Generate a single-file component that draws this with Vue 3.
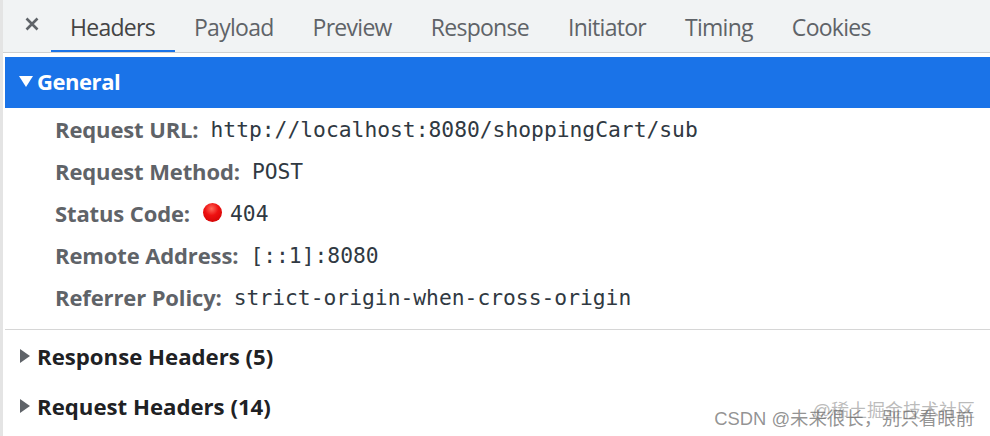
<template>
  <div class="panel">
    <div class="tabbar">
      <svg class="close" width="16" height="16" viewBox="0 0 16 16">
        <path d="M2.5 2.5 L13.5 13.5 M13.5 2.5 L2.5 13.5" stroke="#5f6368" stroke-width="2.6" fill="none" />
      </svg>
      <div class="tabs">
        <div v-for="tab in tabs" :key="tab" class="tab" :class="{ active: tab === 'Headers' }">{{ tab }}</div>
      </div>
    </div>

    <div class="general">
      <span class="arrow-down"></span>
      <span>General</span>
    </div>

    <div class="rows">
      <div v-for="row in rows" :key="row.label" class="row">
        <span class="label">{{ row.label }}:</span>
        <span v-if="row.dot" class="dot"></span>
        <span class="value">{{ row.value }}</span>
      </div>
    </div>

    <div class="section">
      <div v-for="name in sections" :key="name" class="section-row">
        <span class="arrow-right"></span>
        <span>{{ name }}</span>
      </div>
    </div>

    <div class="mark mark-back">@稀土掘金技术社区</div>
    <div class="mark mark-front">CSDN @未来很长，别只看眼前</div>
  </div>
</template>

<script setup>
const tabs = ['Headers', 'Payload', 'Preview', 'Response', 'Initiator', 'Timing', 'Cookies']

const rows = [
  { label: 'Request URL', value: 'http://localhost:8080/shoppingCart/sub' },
  { label: 'Request Method', value: 'POST' },
  { label: 'Status Code', value: '404', dot: true },
  { label: 'Remote Address', value: '[::1]:8080' },
  { label: 'Referrer Policy', value: 'strict-origin-when-cross-origin' },
]

const sections = ['Response Headers (5)', 'Request Headers (14)']
</script>

<style>
html,
body {
  margin: 0;
  background: #fff;
}
</style>

<style scoped>
.panel {
  position: relative;
  width: 990px;
  height: 436px;
  overflow: hidden;
  box-sizing: border-box;
  padding-left: 5px;
  background: #fff;
  font-family: "Open Sans", "Noto Sans", sans-serif;
  box-shadow: inset 3px 0 0 #e4e4e4;
}

.tabbar {
  display: flex;
  align-items: flex-end;
  height: 53px;
  margin-left: -2px;
  padding-left: 2px;
  background: #f1f3f4;
  border-bottom: 1px solid #d0d0d0;
  box-sizing: border-box;
}

.close {
  margin: 0 0 20px 19px;
}

.tabs {
  display: flex;
  margin-left: 11px;
}

.tab {
  height: 52px;
  box-sizing: border-box;
  padding: 12px 20px 0 19px;
  font-size: 23px;
  line-height: 30px;
  color: #5f6368;
  letter-spacing: -0.72px;
}

.tab.active {
  color: #444;
  border-bottom: 2px solid #1a73e8;
}

.general {
  display: flex;
  align-items: center;
  gap: 4px;
  height: 51px;
  margin-top: 4px;
  padding: 0 0 3px 14px;
  box-sizing: border-box;
  background: #1a73e8;
  color: #fff;
  font-size: 22px;
  font-weight: 700;
  letter-spacing: -0.45px;
}

.arrow-down {
  width: 0;
  height: 0;
  border-left: 7px solid transparent;
  border-right: 7px solid transparent;
  border-top: 11px solid #fff;
}

.rows {
  display: flex;
  flex-direction: column;
  gap: 10px;
  padding: 5px 0 16px 50px;
  border-bottom: 1px solid #d6d6d6;
}

.row {
  display: flex;
  align-items: center;
  height: 32px;
}

.label {
  margin-right: 12px;
  font-size: 22px;
  font-weight: 700;
  color: #5f6368;
  letter-spacing: -0.12px;
}

.dot {
  width: 19px;
  height: 19px;
  margin: -2px 8px 0 1px;
  border-radius: 50%;
  background: radial-gradient(circle at 45% 30%, #ff6a5a 0, #ee1111 40%, #c80000 100%);
}

.value {
  font-family: "DejaVu Sans Mono", "Liberation Mono", monospace;
  font-size: 21.3px;
  color: #303942;
}

.section {
  display: flex;
  flex-direction: column;
  gap: 18px;
  padding: 10px 0 0 15px;
}

.section-row {
  display: flex;
  align-items: center;
  gap: 7px;
  height: 32px;
  font-size: 22.2px;
  font-weight: 700;
  color: #202124;
}

.arrow-right {
  width: 0;
  height: 0;
  border-top: 7px solid transparent;
  border-bottom: 7px solid transparent;
  border-left: 10px solid #5f6368;
}

.mark {
  position: absolute;
  white-space: nowrap;
  font-family: "Liberation Sans", "Noto Sans CJK SC", sans-serif;
}

.mark-back {
  right: 15px;
  top: 396px;
  font-size: 18px;
  color: rgba(120, 120, 120, 0.5);
}

.mark-front {
  right: 16px;
  top: 404px;
  font-size: 18.4px;
  color: rgba(100, 100, 100, 0.7);
}
</style>
